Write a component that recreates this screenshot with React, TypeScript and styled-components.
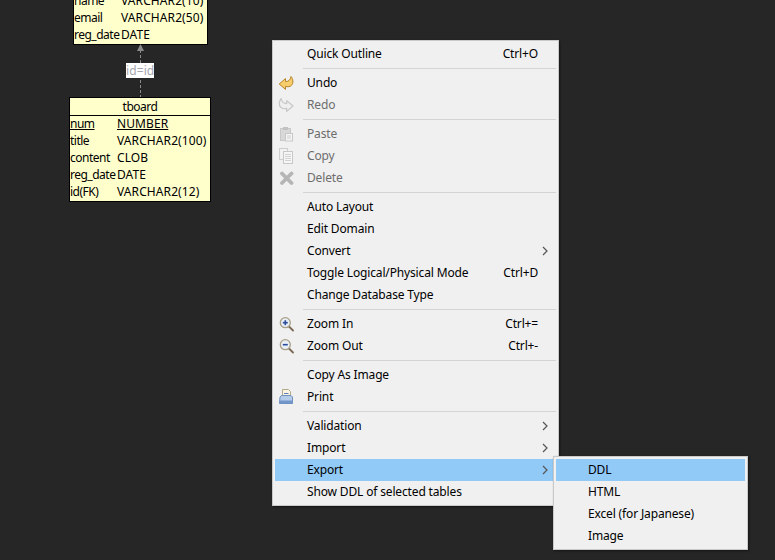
import { Fragment, ReactNode } from 'react'
import styled, { createGlobalStyle } from 'styled-components'

const GlobalStyle = createGlobalStyle`
  html, body {
    margin: 0;
    padding: 0;
    background-color: #262626;
    overflow: hidden;
  }
  body {
    font-family: "Noto Sans", "Open Sans", sans-serif;
    font-size: 12px;
    color: #000;
  }
`

const Canvas = styled.div`
  position: relative;
  width: 775px;
  height: 560px;
  overflow: hidden;
  background-color: #262626;
`

const TableNode = styled.div<{ $left: number; $top: number; $width: number }>`
  position: absolute;
  left: ${(p) => p.$left}px;
  top: ${(p) => p.$top}px;
  width: ${(p) => p.$width}px;
  box-sizing: border-box;
  border: 1px solid #000;
  background-color: #ffffcc;
  line-height: 16px;
`

const TableName = styled.div`
  height: 17px;
  line-height: 17px;
  text-align: center;
  letter-spacing: -0.5px;
  border-bottom: 1px solid #000;
`

const Columns = styled.div<{ $nameWidth: number }>`
  display: grid;
  grid-template-columns: ${(p) => p.$nameWidth}px 1fr;
  grid-auto-rows: 17px;
`

const NameCell = styled.div<{ $key?: boolean }>`
  white-space: nowrap;
  height: 16px;
  letter-spacing: -0.5px;
  text-decoration: ${(p) => (p.$key ? 'underline' : 'none')};
`

const TypeCell = styled.div<{ $key?: boolean }>`
  white-space: nowrap;
  height: 16px;
  letter-spacing: 0.1px;
  text-decoration: ${(p) => (p.$key ? 'underline' : 'none')};
`

const Relation = styled.svg`
  position: absolute;
  left: 130px;
  top: 40px;
`

const RelationLabel = styled.div`
  position: absolute;
  left: 126px;
  top: 63px;
  width: 28px;
  height: 15px;
  line-height: 15px;
  text-align: center;
  letter-spacing: 0.1px;
  white-space: nowrap;
  background-color: #fff;
  color: #a6a6b0;
`

const Menu = styled.div<{ $left: number; $top: number; $width: number }>`
  position: absolute;
  left: ${(p) => p.$left}px;
  top: ${(p) => p.$top}px;
  width: ${(p) => p.$width}px;
  box-sizing: border-box;
  padding: 2px;
  background-color: #f0f0f0;
  border: 1px solid #c9c9c9;
  box-shadow: 1px 1px 2px rgba(0, 0, 0, 0.45);
`

const Row = styled.div<{ $disabled?: boolean; $active?: boolean }>`
  display: grid;
  grid-template-columns: 32px 1fr auto 18px;
  align-items: center;
  height: 22px;
  line-height: 20px;
  white-space: nowrap;
  letter-spacing: -0.15px;
  color: ${(p) => (p.$disabled ? '#6d6d6d' : '#000')};
  background-color: ${(p) => (p.$active ? '#91c9f7' : 'transparent')};
`

const IconSlot = styled.span`
  display: flex;
  padding-left: 3px;
`

const Label = styled.span`
  margin-top: -1px;
`

const Shortcut = styled.span`
  margin-top: -1px;
`

const ArrowSlot = styled.span`
  display: flex;
  padding-left: 2px;
`

const Separator = styled.div`
  height: 1px;
  margin: 3px 0 3px 28px;
  background-color: #d4d4d4;
`

const UndoIcon = () => (
  <svg width='16' height='16' viewBox='0 0 16 16'>
    <path
      d='M1.2 9 L7.5 3.6 L7.5 6.6 C10.5 6.6 12.4 5 13 1.5 C15.2 4 15.6 8 13.6 10.2 C12 12 9.8 12 7.5 11.4 L7.5 14.4 Z'
      fill='#f7cd6c'
      stroke='#b5842b'
      strokeWidth='1'
      strokeLinejoin='round'
    />
  </svg>
)

const RedoIcon = () => (
  <svg width='16' height='16' viewBox='0 0 16 16'>
    <path
      d='M15 9 L8.7 3.6 L8.7 6.6 C5.7 6.6 3.8 5 3.2 1.5 C1 4 0.6 8 2.6 10.2 C4.2 12 6.4 12 8.7 11.4 L8.7 14.4 Z'
      fill='#efefef'
      stroke='#c6c6c6'
      strokeWidth='1.2'
      strokeLinejoin='round'
    />
  </svg>
)

const PasteIcon = () => (
  <svg width='16' height='16' viewBox='0 0 16 16'>
    <rect x='2.5' y='2.5' width='10' height='12' fill='#d8d8d8' stroke='#c8c8c8' />
    <rect x='5' y='1' width='5' height='3' fill='#c2c2c2' />
    <rect x='7.5' y='7.5' width='7' height='7.5' fill='#f4f4f4' stroke='#c8c8c8' />
    <path d='M9 10h4M9 12h4' stroke='#d0d0d0' />
  </svg>
)

const CopyIcon = () => (
  <svg width='16' height='16' viewBox='0 0 16 16'>
    <rect x='1.5' y='0.5' width='8' height='11' fill='#f2f2f2' stroke='#cdcdcd' />
    <rect x='5.5' y='3.5' width='9' height='12' fill='#f6f6f6' stroke='#c8c8c8' />
    <path d='M7 6.5h6M7 8.5h6M7 10.5h6M7 12.5h6' stroke='#d2d2d2' />
  </svg>
)

const DeleteIcon = () => (
  <svg width='16' height='16' viewBox='0 0 16 16'>
    <path d='M4 3.5 L13.5 13 M13.5 3.5 L4 13' stroke='#b5b5b5' strokeWidth='3.8' strokeLinecap='round' />
  </svg>
)

const ZoomIcon = ({ plus }: { plus?: boolean }) => (
  <svg width='16' height='16' viewBox='0 0 16 16'>
    <path d='M11 10.5 L15 14.5' stroke='#7a6a55' strokeWidth='1.8' strokeLinecap='round' />
    <circle cx='7.3' cy='6.7' r='5' fill='#e8eef6' stroke='#a89f85' strokeWidth='1.3' />
    <path d='M4.8 6.7h5' stroke='#2b4c9b' strokeWidth='1.6' />
    {plus && <path d='M7.3 4.2v5' stroke='#2b4c9b' strokeWidth='1.6' />}
  </svg>
)

const PrintIcon = () => (
  <svg width='16' height='16' viewBox='0 0 16 16'>
    <path d='M4.5 0.5h6l2 2v6h-8z' fill='#fbf6e4' stroke='#b4a98a' />
    <path d='M6 4.5h4.5M6 6.5h4.5' stroke='#5f7fb5' />
    <path d='M2 8 L3.5 6.5h9.5l1.5 1.5v6.5h-13z' fill='#b6cdea' stroke='#6f8fbd' />
    <rect x='1.5' y='11.5' width='13' height='3' fill='#7296c9' />
  </svg>
)

const ChevronIcon = () => (
  <svg width='10' height='10' viewBox='0 0 10 10'>
    <path d='M3 1 L7 5 L3 9' fill='none' stroke='#555' strokeWidth='1.2' />
  </svg>
)

type Item =
  | 'sep'
  | {
      label: string
      icon?: ReactNode
      shortcut?: string
      disabled?: boolean
      sub?: boolean
      active?: boolean
    }

const mainItems: Item[] = [
  { label: 'Quick Outline', shortcut: 'Ctrl+O' },
  'sep',
  { label: 'Undo', icon: <UndoIcon /> },
  { label: 'Redo', icon: <RedoIcon />, disabled: true },
  'sep',
  { label: 'Paste', icon: <PasteIcon />, disabled: true },
  { label: 'Copy', icon: <CopyIcon />, disabled: true },
  { label: 'Delete', icon: <DeleteIcon />, disabled: true },
  'sep',
  { label: 'Auto Layout' },
  { label: 'Edit Domain' },
  { label: 'Convert', sub: true },
  { label: 'Toggle Logical/Physical Mode', shortcut: 'Ctrl+D' },
  { label: 'Change Database Type' },
  'sep',
  { label: 'Zoom In', icon: <ZoomIcon plus />, shortcut: 'Ctrl+=' },
  { label: 'Zoom Out', icon: <ZoomIcon />, shortcut: 'Ctrl+-' },
  'sep',
  { label: 'Copy As Image' },
  { label: 'Print', icon: <PrintIcon /> },
  'sep',
  { label: 'Validation', sub: true },
  { label: 'Import', sub: true },
  { label: 'Export', sub: true, active: true },
  { label: 'Show DDL of selected tables' },
]

const exportItems: Item[] = [
  { label: 'DDL', active: true },
  { label: 'HTML' },
  { label: 'Excel (for Japanese)' },
  { label: 'Image' },
]

function renderItems(items: Item[]) {
  return items.map((item, i) =>
    item === 'sep' ? (
      <Separator key={i} />
    ) : (
      <Row key={item.label} $disabled={item.disabled} $active={item.active}>
        <IconSlot>{item.icon}</IconSlot>
        <Label>{item.label}</Label>
        <Shortcut>{item.shortcut}</Shortcut>
        <ArrowSlot>{item.sub && <ChevronIcon />}</ArrowSlot>
      </Row>
    ),
  )
}

const memberRows = [
  ['name', 'VARCHAR2(10)'],
  ['email', 'VARCHAR2(50)'],
  ['reg_date', 'DATE'],
]

const boardRows = [
  ['num', 'NUMBER'],
  ['title', 'VARCHAR2(100)'],
  ['content', 'CLOB'],
  ['reg_date', 'DATE'],
  ['id(FK)', 'VARCHAR2(12)'],
]

function App() {
  return (
    <Canvas>
      <GlobalStyle />
      <TableNode $left={73} $top={-8} $width={135}>
        <Columns $nameWidth={47}>
          {memberRows.map(([name, type]) => (
            <Fragment key={name}>
              <NameCell>{name}</NameCell>
              <TypeCell>{type}</TypeCell>
            </Fragment>
          ))}
        </Columns>
      </TableNode>

      <Relation width='20' height='60' viewBox='0 0 20 60'>
        <path d='M10.5 10 V57' stroke='#8a8a8a' strokeDasharray='3 2' fill='none' />
        <path d='M10.5 4 L14 11 H7 Z' fill='#8a8a8a' />
      </Relation>
      <RelationLabel>id=id</RelationLabel>

      <TableNode $left={69} $top={97} $width={142}>
        <TableName>tboard</TableName>
        <Columns $nameWidth={47}>
          {boardRows.map(([name, type], i) => (
            <Fragment key={name}>
              <NameCell $key={i === 0}>{name}</NameCell>
              <TypeCell $key={i === 0}>{type}</TypeCell>
            </Fragment>
          ))}
        </Columns>
      </TableNode>

      <Menu $left={272} $top={40} $width={287}>
        {renderItems(mainItems)}
      </Menu>
      <Menu $left={553} $top={456} $width={195}>
        {renderItems(exportItems)}
      </Menu>
    </Canvas>
  )
}

export default App
